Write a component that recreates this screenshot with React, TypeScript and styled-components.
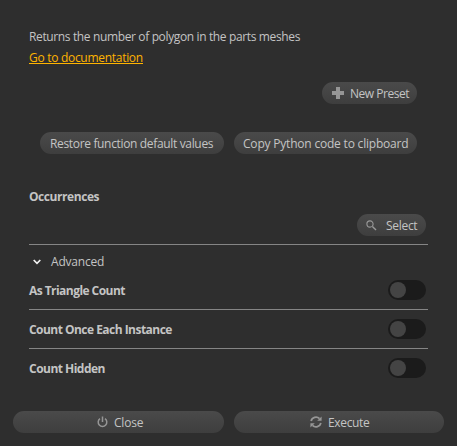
import React, { useState } from "react";
import styled, { createGlobalStyle } from "styled-components";

const GlobalStyle = createGlobalStyle`
  * { box-sizing: border-box; }
  body { margin: 0; background: #2e2e2e; }
`;

const Panel = styled.main`
  display: flex;
  flex-direction: column;
  height: 446px;
  width: 457px;
  padding-top: 29px;
  background: #2e2e2e;
  color: #c4c4c4;
  font: 12px/16px "Open Sans", "Noto Sans", sans-serif;
  white-space: nowrap;
`;

const Content = styled.div`
  display: flex;
  flex-direction: column;
  width: 399px;
  margin-left: 29px;
`;

const Description = styled.p`
  margin: 0 0 5px;
  letter-spacing: -0.365px;
`;

const DocLink = styled.a`
  align-self: flex-start;
  height: 14px;
  color: #ffb400;
  letter-spacing: -0.29px;
  text-decoration: none;
  border-bottom: 1px solid #ffb400;
`;

const PresetRow = styled.div`
  display: flex;
  justify-content: flex-end;
  margin-top: 18px;
  padding-right: 11px;
`;

const ActionRow = styled.div`
  display: flex;
  gap: 10px;
  margin: 28px 0 33px;
  padding-left: 11px;
`;

const SelectRow = styled.div`
  display: flex;
  justify-content: flex-end;
  margin-top: 9px;
  padding: 0 2px 8px 0;
`;

const Button = styled.button<{ $width: number; $inset: number; $gap?: number; $tracking: number }>`
  display: flex;
  align-items: center;
  gap: ${(p) => p.$gap ?? 0}px;
  width: ${(p) => p.$width}px;
  height: 22px;
  padding: 2px 0 0 ${(p) => p.$inset}px;
  border: 0;
  border-radius: 11px;
  background: linear-gradient(#4a4a4a, #3e3e3e);
  color: inherit;
  font: inherit;
  letter-spacing: ${(p) => p.$tracking}px;
  white-space: nowrap;

  svg { flex: none; display: block; margin-bottom: 2px; }
`;

const Label = styled.span<{ $tracking: number }>`
  padding-top: 2px;
  font-weight: 700;
  letter-spacing: ${(p) => p.$tracking}px;
`;

const Divider = styled.hr`
  width: 100%;
  height: 1px;
  margin: 0;
  border: 0;
  background: #858585;
`;

const SectionHeader = styled.div`
  display: flex;
  align-items: center;
  gap: 10px;
  height: 16px;
  margin: 8px 0 11px;
  padding: 2px 0 0 4px;
  letter-spacing: -0.2px;

  svg { margin-bottom: 1px; }
`;

const OptionRow = styled.div`
  display: flex;
  align-items: center;
  justify-content: space-between;
  height: 20px;
  padding-right: 2px;

  & + hr { margin: 9px 0 9px; }
`;

const Track = styled.button<{ $on: boolean }>`
  display: flex;
  align-items: center;
  justify-content: ${(p) => (p.$on ? "flex-end" : "flex-start")};
  width: 38px;
  height: 20px;
  padding: 0 2px;
  border: 0;
  border-radius: 10px;
  background: #1b1b1b;
`;

const Knob = styled.span`
  width: 16px;
  height: 16px;
  border-radius: 50%;
  background: #444;
`;

const Footer = styled.footer`
  display: flex;
  gap: 10px;
  margin: 33px 0 0 13px;
`;

const PlusIcon = () => (
  <svg width="12" height="12" viewBox="0 0 12 12">
    <path d="M4 0h4v4h4v4H8v4H4V8H0V4h4z" fill="#969696" />
  </svg>
);

const SearchIcon = () => (
  <svg width="11" height="11" viewBox="0 0 11 11" fill="none" stroke="#999">
    <circle cx="4" cy="4" r="3.1" strokeWidth="1.1" />
    <path d="M6.4 6.4l3.6 3.6" strokeWidth="1.4" />
  </svg>
);

const ChevronIcon = () => (
  <svg width="8" height="6" viewBox="0 0 8 6">
    <path d="M.7 1L4 4.3 7.3 1" fill="none" stroke="#f2f2f2" strokeWidth="1.7" />
  </svg>
);

const PowerIcon = () => (
  <svg width="11" height="12" viewBox="0 0 11 12" fill="none" stroke="#969696" strokeWidth="1.5">
    <path d="M3 2.6a4.3 4.3 0 1 0 5 0M5.5.5V6" />
  </svg>
);

const RefreshIcon = () => (
  <svg width="12" height="12" viewBox="0 0 12 12">
    <path d="M1.1 5a5 5 0 0 1 8.4-2.4M10.9 7a5 5 0 0 1-8.4 2.4" fill="none" stroke="#969696" strokeWidth="1.8" />
    <path d="M11.6.4v4.4H7.2zM.4 11.6V7.2h4.4z" fill="#969696" />
  </svg>
);

const options = [
  { name: "As Triangle Count", tracking: -0.55 },
  { name: "Count Once Each Instance", tracking: -0.53 },
  { name: "Count Hidden", tracking: -0.52 },
];

function Toggle({ label }: { label: string }) {
  const [on, setOn] = useState(false);
  return (
    <Track type="button" role="switch" aria-label={label} aria-checked={on} $on={on} onClick={() => setOn(!on)}>
      <Knob />
    </Track>
  );
}

export default function App() {
  return (
    <Panel>
      <GlobalStyle />
      <Content>
        <Description>Returns the number of polygon in the parts meshes</Description>
        <DocLink href="#">Go to documentation</DocLink>
        <PresetRow>
          <Button $width={95} $inset={10} $gap={6} $tracking={-0.47}>
            <PlusIcon />
            New Preset
          </Button>
        </PresetRow>
        <ActionRow>
          <Button $width={184} $inset={10} $tracking={-0.34}>Restore function default values</Button>
          <Button $width={183} $inset={9} $tracking={-0.2}>Copy Python code to clipboard</Button>
        </ActionRow>
        <Label $tracking={-0.43}>Occurrences</Label>
        <SelectRow>
          <Button $width={69} $inset={9} $gap={9} $tracking={-0.3}>
            <SearchIcon />
            Select
          </Button>
        </SelectRow>
        <Divider />
        <SectionHeader>
          <ChevronIcon />
          Advanced
        </SectionHeader>
        {options.map(({ name, tracking }, i) => (
          <React.Fragment key={name}>
            <OptionRow>
              <Label $tracking={tracking}>{name}</Label>
              <Toggle label={name} />
            </OptionRow>
            {i < options.length - 1 && <Divider />}
          </React.Fragment>
        ))}
      </Content>
      <Footer>
        <Button $width={211} $inset={84} $gap={6} $tracking={-0.2}>
          <PowerIcon />
          Close
        </Button>
        <Button $width={210} $inset={76} $gap={6} $tracking={-0.35}>
          <RefreshIcon />
          Execute
        </Button>
      </Footer>
    </Panel>
  );
}
